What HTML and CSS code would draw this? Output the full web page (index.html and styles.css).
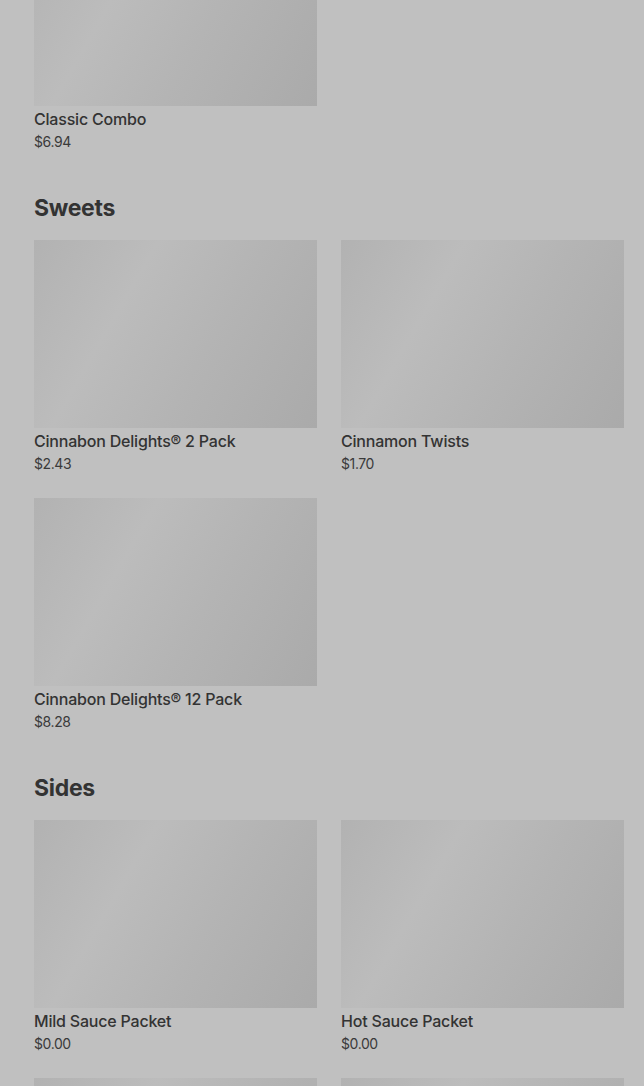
FILE: index.html
```html
<!DOCTYPE html>
<html lang="en">
<head>
<meta charset="utf-8">
<title>Menu</title>
<link rel="stylesheet" href="styles.css">
</head>
<body>
<main class="menu">
  <section class="section first">
    <div class="grid">
      <div class="card"><div class="thumb"></div><div class="name">Classic Combo</div><div class="price">$6.94</div></div>
    </div>
  </section>
  <section class="section">
    <h2 class="heading">Sweets</h2>
    <div class="grid">
      <div class="card"><div class="thumb"></div><div class="name">Cinnabon Delights® 2 Pack</div><div class="price">$2.43</div></div>
      <div class="card"><div class="thumb"></div><div class="name">Cinnamon Twists</div><div class="price">$1.70</div></div>
      <div class="card"><div class="thumb"></div><div class="name">Cinnabon Delights® 12 Pack</div><div class="price">$8.28</div></div>
    </div>
  </section>
  <section class="section">
    <h2 class="heading">Sides</h2>
    <div class="grid">
      <div class="card"><div class="thumb"></div><div class="name">Mild Sauce Packet</div><div class="price">$0.00</div></div>
      <div class="card"><div class="thumb"></div><div class="name">Hot Sauce Packet</div><div class="price">$0.00</div></div>
      <div class="card"><div class="thumb"></div></div>
      <div class="card"><div class="thumb"></div></div>
    </div>
  </section>
</main>
</body>
</html>
```
FILE: styles.css
```css
html, body {
  margin: 0;
  padding: 0;
  background: #c0c0c0;
  height: 1086px;
  overflow: hidden;
}
body {
  font-family: Inter, "Liberation Sans", sans-serif;
  color: #333333;
}
.menu {
  padding: 0 20px 0 34px;
  margin-top: -82px;
  display: flex;
  flex-direction: column;
  gap: 40px;
}
.section {
  display: flex;
  flex-direction: column;
  gap: 16px;
}
.heading {
  margin: 0;
  font-size: 23px;
  line-height: 32px;
  font-weight: 700;
  color: #333333;
  letter-spacing: -0.3px;
}
.grid {
  display: grid;
  grid-template-columns: 283px 283px;
  column-gap: 24px;
  row-gap: 24px;
}
.card {
  display: flex;
  flex-direction: column;
}
.thumb {
  height: 188px;
  background: linear-gradient(120deg, #b2b2b2 0%, #bcbcbc 32%, #b4b4b4 60%, #aaaaaa 100%);
  margin-bottom: 3px;
}
.name {
  font-size: 16px;
  line-height: 20px;
  font-weight: 500;
  color: #333333;
  letter-spacing: -0.2px;
}
.price {
  font-size: 14px;
  line-height: 20px;
  margin-top: 3px;
  color: #3a3a3a;
  letter-spacing: -0.4px;
}
```
